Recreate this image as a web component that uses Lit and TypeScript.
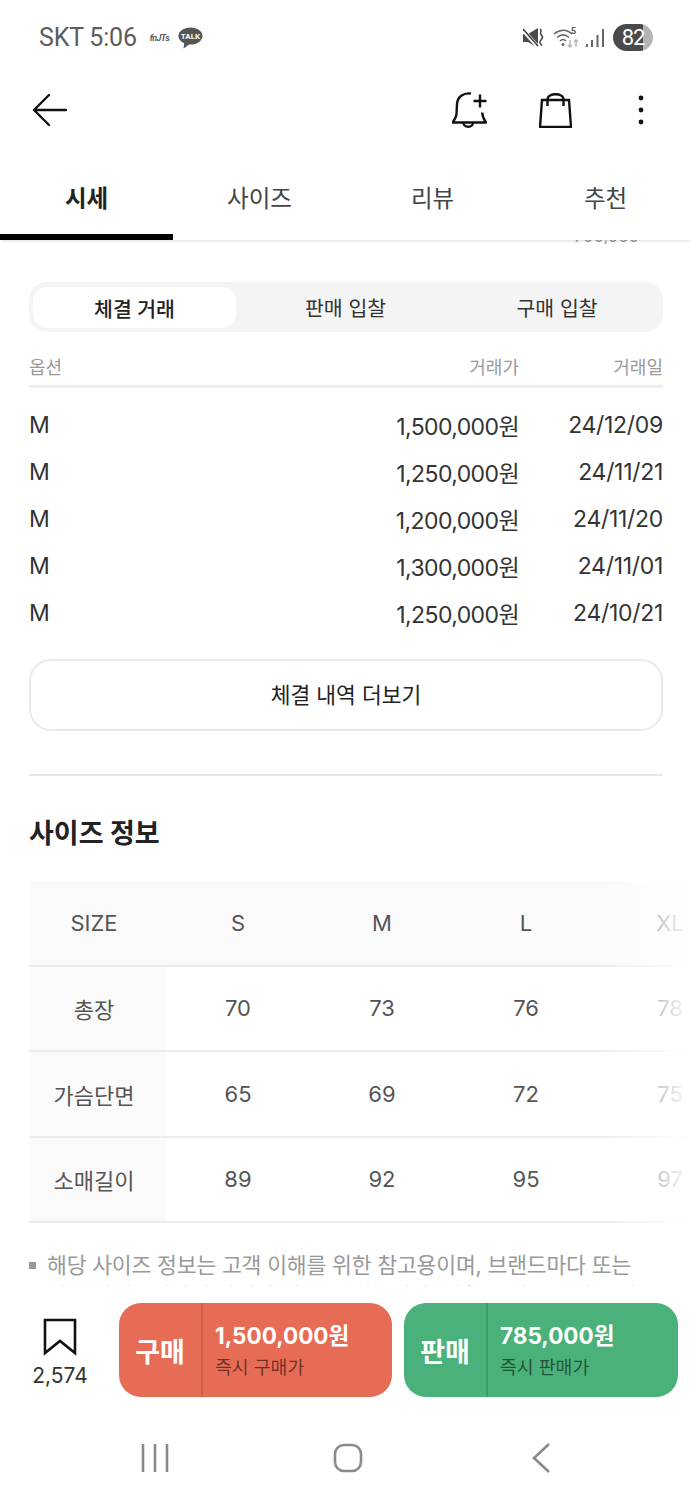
import { LitElement, html, css } from "lit";
import { customElement } from "lit/decorators.js";

const trades = [
  ["M", "1,500,000원", "24/12/09"],
  ["M", "1,250,000원", "24/11/21"],
  ["M", "1,200,000원", "24/11/20"],
  ["M", "1,300,000원", "24/11/01"],
  ["M", "1,250,000원", "24/10/21"],
];
const sizes = [
  ["SIZE", "S", "M", "L", "XL"],
  ["총장", "70", "73", "76", "78"],
  ["가슴단면", "65", "69", "72", "75"],
  ["소매길이", "89", "92", "95", "97"],
];

@customElement("app-root")
export class AppRoot extends LitElement {
  static styles = css`
    :host { display: block; width: 692px; height: 1500px; background: #fff; color: #222;
      font-family: Inter, "Noto Sans CJK KR", sans-serif; overflow: hidden; }
    .page { height: 1500px; display: flex; flex-direction: column; }
    .status { height: 70px; flex: none; display: flex; align-items: center; justify-content: space-between;
      padding: 5px 39px 0 39px; box-sizing: border-box; color: #5c5c5c; font-family: Roboto, sans-serif; }
    .st-left, .st-right { display: flex; align-items: center; }
    .clock { font-size: 25px; letter-spacing: -0.2px; }
    .mts { font-size: 9px; font-style: italic; font-weight: 700; margin: 0 8px 0 13px; letter-spacing: -.6px; width: 20px; }
    .st-right { gap: 8px; }
    .batt { width: 40px; height: 27px; border-radius: 14px; color: #fff; font-size: 22px; letter-spacing: -1px; line-height: 27px; text-align: center;
      background: linear-gradient(90deg, #4a4a4a 0 76%, #b4b4b4 76%); }
    .nav { height: 80px; flex: none; display: flex; align-items: center; justify-content: space-between; padding: 0 47px 0 32px; }
    .nav-right { display: flex; align-items: center; }
    .icon { display: block; fill: none; stroke: #111; stroke-width: 2.4; }
    .bell { margin-right: 52px; }
    .bag { margin-right: 65px; }
    .tabs { height: 90px; flex: none; display: grid; grid-template-columns: repeat(4, 173px); background: #fff; position: relative; z-index: 2;
      box-shadow: 0 3px 3px -2px rgba(0,0,0,.14); }
    .tab { display: flex; align-items: center; justify-content: center; font-size: 23.5px; color: #444; padding-top: 4px; box-sizing: border-box; }
    .tab.on { font-weight: 700; color: #222; border-bottom: 6px solid #000; padding-top: 10px; }
    .content { flex: 1; min-height: 0; overflow: hidden; padding: 0 29px; }
    .clip { height: 4px; display: flex; justify-content: flex-end; align-items: flex-end; overflow: hidden; padding-right: 24px;
      font-size: 16.500px; line-height: 16px; color: #999; }
    .clip span { flex: none; }
    .seg { margin-top: 38px; height: 50px; border-radius: 18px; background: #f4f4f4; display: grid; grid-template-columns: 211px 211px 212px;
      font-size: 20.5px; color: #333; }
    .seg div { display: flex; align-items: center; justify-content: center; }
    .seg .on { margin: 5px 4px 4px 4px; background: #fff; border-radius: 14px; font-weight: 500; color: #222; }
    .thead { display: grid; grid-template-columns: 1fr 140px 144px; height: 39px; padding-top: 14px; border-bottom: 3px solid #eee;
      align-items: center; font-size: 18px; color: #9a9a9a; }
    .tbody { padding-top: 13.5px; }
    .row { display: grid; grid-template-columns: 1fr 140px 144px; height: 47px; align-items: center; font-size: 23px; color: #333; letter-spacing: -0.3px; }
    .r { text-align: right; }
    .price { letter-spacing: -0.6px; }
    .more { margin-top: 22.5px; height: 72px; box-sizing: border-box; border: 2px solid #eaeaea; border-radius: 22px; display: flex; align-items: center; justify-content: center;
      font-size: 21.500px; color: #222; padding-bottom: 3px; }
    .hr { margin-top: 43px; height: 2px; background: #e9e9e9; }
    h2 { margin: 39px 0 0; height: 38px; line-height: 38px; font-size: 27px; font-weight: 700; color: #222; }
    .tablewrap { position: relative; margin-top: 28px; margin-right: -29px; overflow: hidden; }
    .tr { display: grid; grid-template-columns: 137px repeat(4, 144px); height: 85.5px; border-bottom: 2px solid #ececec; box-sizing: border-box; align-items: stretch; }
    .tr.h { background: #fafafa; }
    .td { display: flex; align-items: center; justify-content: center; font-size: 22px; color: #555; }
    .td.first { background: #fafafa; padding-right: 7px; }
    .fade { position: absolute; top: 0; bottom: 0; right: 0; width: 92px;
      background: linear-gradient(90deg, rgba(255,255,255,0), rgba(255,255,255,.78) 75%, #fff); pointer-events: none; }
    .note { margin-top: 27px; display: grid; grid-template-columns: 18px 1fr; font-size: 21.600px; line-height: 31px; color: #999; letter-spacing: -0.2px; width: 640px; word-break: keep-all; }
    .dot { width: 7px; height: 7px; background: #999; margin-top: 12px; }
    .bottom { height: 129px; flex: none; background: #fff; box-sizing: border-box; display: flex; padding: 17px 14px 0 1px; position: relative; z-index: 2; align-items: flex-start; }
    .mark { width: 118px; flex: none; display: flex; flex-direction: column; align-items: center; padding-top: 15px; box-sizing: border-box; font-size: 21px; color: #333; gap: 5px; }
    .mark span { line-height: 30px; }
    .btns { flex: 1; display: grid; grid-template-columns: 273px 274px; gap: 12px; }
    .btn { height: 94px; border-radius: 22px; display: flex; color: #fff; }
    .buy { background: #e76c56; --ln: #cf5c47; }
    .sell { background: #49b179; --ln: #3d9a68; }
    .b-l { width: 84px; flex: none; border-right: 2px solid var(--ln); display: flex; align-items: center; justify-content: center; font-size: 27px; font-weight: 700; box-sizing: border-box; }
    .b-r { padding: 15px 0 0 12px; display: flex; flex-direction: column; }
    .b-r b { font-size: 22.500px; line-height: 36px; font-weight: 700; }
    .b-r small { font-size: 18.300px; line-height: 26px; color: rgba(0,0,0,.55); }
    .sys { height: 85px; flex: none; display: grid; grid-template-columns: 193px 193px 196px; justify-content: start; padding-left: 58px; align-items: center; }
    .sys svg { display: block; margin: 0 auto; fill: none; stroke: #8a8a8a; stroke-width: 2.6; }
  `;

  render() {
    return html`<div class="page">
      <div class="status">
        <div class="st-left">
          <span class="clock">SKT 5:06</span><span class="mts">fnJTs</span>
          <svg width="25" height="22" viewBox="0 0 25 22">
            <path d="M12.500 .5C5.800 .5.5 4.200.5 8.900c0 3.100 2.300 5.800 5.700 7.300L5.500 21.500l5.500-4.100c.5 0 1 .1 1.500.1 6.700 0 12-3.800 12-8.600S19.200.5 12.500.5z" fill="#555"/>
            <text x="12.500" y="12" text-anchor="middle" font-size="8" font-weight="700" fill="#fff" font-family="Roboto, sans-serif">TALK</text>
          </svg>
        </div>
        <div class="st-right">
          <svg width="21" height="22" viewBox="0 0 21 22" style="margin-right:1px">
            <path d="M0 7h5l10-6v20L5 15H0z" fill="#4a4a4a"/>
            <path d="M0 3l16 18" stroke="#fff" stroke-width="4"/>
            <path d="M0 2l15 17" stroke="#4a4a4a" stroke-width="1.800"/>
            <path d="M17 2c3 2-1 3 1 5.500s2 3 0 5.500-1 3 1 5.500" stroke="#4a4a4a" stroke-width="1.600" fill="none"/>
          </svg>
          <svg width="27" height="22" viewBox="0 0 27 22" fill="none" stroke="#666" stroke-width="1.600">
            <path d="M1 7c6-5 13-5 18 0M4 10.500c4-3.500 8-3.500 12 0M7 14c2-2 4-2 6 0"/>
            <circle cx="10" cy="17.500" r="1.500" fill="#666" stroke="none"/>
            <text x="18" y="7" font-size="9" font-weight="700" fill="#555" stroke="none" font-family="Roboto, sans-serif">5</text>
            <path d="M17 13v7M15 18l2 2 2-2" stroke="#bbb"/><path d="M23 20v-7M21 15l2-2 2 2" stroke="#bbb"/>
          </svg>
          <svg width="19" height="22" viewBox="0 0 19 22" fill="#666" style="margin-left:-2px">
            <rect x="0" y="17" width="2" height="3"/><rect x="5" y="13" width="2" height="7"/><rect x="10.500" y="8" width="2" height="12"/><rect x="16" y="2" width="2" height="18"/>
          </svg>
          <div class="batt">82</div>
        </div>
      </div>

      <div class="nav">
        <svg class="icon" width="35" height="34" viewBox="0 0 35 34"><path d="M34 17H2M17 2L2 17l15 15" stroke-linecap="round" stroke-linejoin="round"/></svg>
        <div class="nav-right">
          <svg class="icon bell" width="35" height="37" viewBox="0 0 35 37">
            <path d="M19 1.500C11 .5 5.500 5 5 12l-.5 10c-.2 3.500-2 6-4 8.500h33.500c-1.500-2-3.500-5-3.800-10" stroke-linejoin="round"/>
            <path d="M11.500 31c.5 5 9 5 9.500 0M21.500 9h13M28 2.500v13"/>
          </svg>
          <svg class="icon bag" width="33" height="35" viewBox="0 0 33 35">
            <path d="M3 7h27l2 27H1zM8.500 13V6.500c0-7 16-7 16 0V13"/>
          </svg>
          <svg width="8" height="30" viewBox="0 0 8 30" fill="#111">
            <circle cx="4" cy="3" r="2.400"/><circle cx="4" cy="15" r="2.400"/><circle cx="4" cy="27" r="2.400"/>
          </svg>
        </div>
      </div>

      <div class="tabs">
        <div class="tab on">시세</div><div class="tab">사이즈</div><div class="tab">리뷰</div><div class="tab">추천</div>
      </div>

      <div class="content">
        <div class="clip"><span>700,000</span></div>
        <div class="seg"><div class="on">체결 거래</div><div>판매 입찰</div><div>구매 입찰</div></div>
        <div class="thead"><span>옵션</span><span class="r">거래가</span><span class="r">거래일</span></div>
        <div class="tbody">
          ${trades.map(t => html`<div class="row"><span>${t[0]}</span><span class="r price">${t[1]}</span><span class="r">${t[2]}</span></div>`)}
        </div>
        <div class="more">체결 내역 더보기</div>
        <div class="hr"></div>
        <h2>사이즈 정보</h2>
        <div class="tablewrap">
          ${sizes.map((r, i) => html`<div class="tr ${i === 0 ? "h" : ""}">
            ${r.map((c, j) => html`<div class="td ${j === 0 ? "first" : ""}">${c}</div>`)}
          </div>`)}
          <div class="fade"></div>
        </div>
        <div class="note">
          <div class="dot"></div>
          <div>해당 사이즈 정보는 고객 이해를 위한 참고용이며, 브랜드마다 또는 상품 카테고리마다 차이가 있을 수 있습니다. 정확한 내용은 상품 상품</div>
        </div>
      </div>

      <div class="bottom">
        <div class="mark">
          <svg width="34" height="38" viewBox="0 0 34 38" fill="none" stroke="#111" stroke-width="2.600"><path d="M2 2h30v33L17 23 2 35z"/></svg>
          <span>2,574</span>
        </div>
        <div class="btns">
          <div class="btn buy"><div class="b-l">구매</div><div class="b-r"><b>1,500,000원</b><small>즉시 구매가</small></div></div>
          <div class="btn sell"><div class="b-l">판매</div><div class="b-r"><b>785,000원</b><small>즉시 판매가</small></div></div>
        </div>
      </div>

      <div class="sys">
        <svg width="30" height="30" viewBox="0 0 30 30"><path d="M3 1v28M15 1v28M27 1v28"/></svg>
        <svg width="30" height="30" viewBox="0 0 30 30"><rect x="2" y="2" width="26" height="26" rx="9"/></svg>
        <svg width="22" height="32" viewBox="0 0 22 32"><path d="M18 2L3 16l15 14"/></svg>
      </div>
    </div>`;
  }
}
